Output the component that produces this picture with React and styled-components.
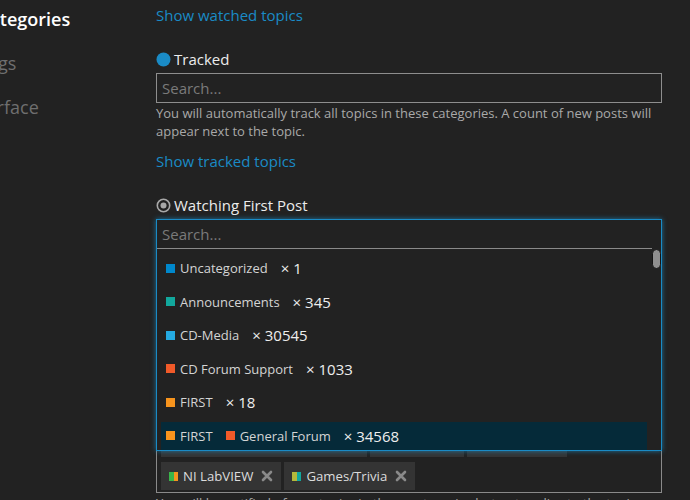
import React from "react";
import styled, { createGlobalStyle } from "styled-components";

const GlobalStyle = createGlobalStyle`
  html, body {
    margin: 0;
    padding: 0;
    background: #222222;
    overflow: hidden;
  }
  body {
    font-family: "Open Sans", "Noto Sans", sans-serif;
    color: #dddddd;
  }
`;

const Page = styled.div`
  display: flex;
  width: 690px;
  height: 500px;
  overflow: hidden;
`;

const Nav = styled.ul`
  list-style: none;
  margin: -3px 0 0 -22px;
  padding: 0;
  width: 178px;
  flex-shrink: 0;
`;

const NavItem = styled.li`
  height: 44px;
  line-height: 44px;
  font-size: 18px;
  font-weight: ${(p) => (p.active ? 600 : 400)};
  color: ${(p) => (p.active ? "#ffffff" : "#6f6f6f")};
  white-space: nowrap;
  margin-left: ${(p) => p.shift || 0}px;
`;

const Main = styled.div`
  width: 506px;
  padding-top: 5px;
  display: flex;
  flex-direction: column;
`;

const Link = styled.a`
  font-size: 15px;
  line-height: 20px;
  color: #1a8bc6;
  text-decoration: none;
  align-self: flex-start;
`;

const Label = styled.div`
  display: flex;
  align-items: center;
  gap: 3px;
  margin-top: 24px;
  font-size: 15px;
  line-height: 20px;
  color: #ececec;
`;

const SearchBox = styled.div`
  margin-top: 4px;
  height: 30px;
  box-sizing: border-box;
  border: 1px solid #8e8e8e;
  padding-left: 5px;
  font-size: 15px;
  line-height: 28px;
  color: #7a7a7a;
`;

const Help = styled.p`
  margin: 1px 0 11px;
  font-size: 13px;
  line-height: 18px;
  color: #a9a9a9;
`;

const SelectWrap = styled.div`
  position: relative;
  margin-top: 4px;
`;

const ChipBox = styled.div`
  box-sizing: border-box;
  min-height: 274px;
  border: 1px solid #8a8a8a;
  padding: 4px 4px 2px;
  display: flex;
  flex-wrap: wrap;
  align-content: flex-end;
  gap: 5px 3px;
`;

const Chip = styled.div`
  display: flex;
  align-items: center;
  height: 28px;
  padding: 0 8px;
  background: #343434;
  font-size: 13.2px;
  color: #dcdcdc;
  box-sizing: border-box;
  width: ${(p) => (p.w ? `${p.w}px` : "auto")};
`;

const DualSwatch = styled.span`
  width: 9px;
  height: 9px;
  margin-right: 5px;
  background: linear-gradient(
    to right,
    ${(p) => p.a} 0 50%,
    ${(p) => p.b} 50% 100%
  );
`;

const ChipClose = styled.svg`
  margin-left: 8px;
  width: 12px;
  height: 12px;
`;

const Dropdown = styled.div`
  position: absolute;
  top: 0;
  left: 0;
  right: 0;
  height: 232px;
  box-sizing: border-box;
  border: 1px solid #1a8bc6;
  box-shadow: 0 0 5px rgba(26, 139, 198, 0.75);
  background: #222222;
  z-index: 2;
  overflow: hidden;
`;

const Filter = styled.div`
  height: 29px;
  box-sizing: border-box;
  border-bottom: 1px solid #8a8a8a;
  padding-left: 5px;
  font-size: 15px;
  line-height: 28px;
  color: #7a7a7a;
  margin-right: 9px;
`;

const Thumb = styled.div`
  position: absolute;
  top: 29px;
  right: 0;
  width: 9px;
  height: 20px;
  box-sizing: border-box;
  border: 1px solid #151515;
  border-radius: 5px;
  background: #8f8f8f;
`;

const List = styled.ul`
  list-style: none;
  margin: 0;
  padding: 5px 14px 0 4px;
  display: flex;
  flex-direction: column;
  gap: 5.5px;
`;

const Row = styled.li`
  display: flex;
  align-items: center;
  height: 28px;
  padding-left: 5px;
  background: ${(p) => (p.active ? "#052a39" : "transparent")};
`;

const Badge = styled.span`
  display: flex;
  align-items: center;
  font-size: 13px;
  color: #d4d4d4;
  & + & {
    margin-left: 13px;
  }
`;

const Swatch = styled.span`
  width: 9px;
  height: 9px;
  margin-right: 5px;
  background: ${(p) => p.color};
`;

const Count = styled.span`
  margin-left: 13px;
  font-size: 15px;
  color: #eeeeee;
`;

const BottomHelp = styled.p`
  margin: 1px 0 0;
  font-size: 13px;
  line-height: 18px;
  color: #a9a9a9;
  white-space: nowrap;
`;

const TrackedIcon = () => (
  <svg width="15" height="15" viewBox="0 0 15 15">
    <circle cx="7.5" cy="7.5" r="7" fill="#1a8bc6" />
  </svg>
);

const FirstPostIcon = () => (
  <svg width="15" height="15" viewBox="0 0 15 15">
    <circle cx="7.5" cy="7.5" r="6.2" fill="none" stroke="#a8a8a8" strokeWidth="1.6" />
    <circle cx="7.5" cy="7.5" r="3" fill="#a8a8a8" />
  </svg>
);

const CloseX = () => (
  <ChipClose viewBox="0 0 12 12">
    <path d="M2 2 L10 10 M10 2 L2 10" stroke="#8a8a8a" strokeWidth="2.6" strokeLinecap="round" />
  </ChipClose>
);

const options = [
  { cats: [{ name: "Uncategorized", color: "#0088cc" }], count: 1 },
  { cats: [{ name: "Announcements", color: "#12a89d" }], count: 345 },
  { cats: [{ name: "CD-Media", color: "#25aae1" }], count: 30545 },
  { cats: [{ name: "CD Forum Support", color: "#f15a29" }], count: 1033 },
  { cats: [{ name: "FIRST", color: "#f7941d" }], count: 18 },
  {
    cats: [
      { name: "FIRST", color: "#f7941d" },
      { name: "General Forum", color: "#f15a29" },
    ],
    count: 34568,
    active: true,
  },
];

// chips in the row that the open menu covers; only their lower edge shows
const hiddenChips = [
  { name: "Technical Discussion", a: "#f7941d", b: "#0088cc", w: 206 },
  { name: "Robotics", a: "#f7941d", b: "#12a89d", w: 94 },
  { name: "Programming", a: "#f7941d", b: "#25aae1", w: 100 },
];

const chips = [
  { name: "NI LabVIEW", a: "#3ab54a", b: "#f7941d" },
  { name: "Games/Trivia", a: "#b5b83a", b: "#12a89d" },
];

export default function App() {
  return (
    <Page>
      <GlobalStyle />
      <Nav>
        <NavItem active>Categories</NavItem>
        <NavItem>Tags</NavItem>
        <NavItem shift={-14}>Interface</NavItem>
      </Nav>
      <Main>
        <Link href="#">Show watched topics</Link>

        <Label>
          <TrackedIcon />
          Tracked
        </Label>
        <SearchBox>Search...</SearchBox>
        <Help>
          You will automatically track all topics in these categories. A count of new posts will
          appear next to the topic.
        </Help>
        <Link href="#">Show tracked topics</Link>

        <Label>
          <FirstPostIcon />
          Watching First Post
        </Label>
        <SelectWrap>
          <ChipBox>
            {hiddenChips.concat(chips).map((c) => (
              <Chip key={c.name} w={c.w}>
                <DualSwatch a={c.a} b={c.b} />
                {c.name}
                <CloseX />
              </Chip>
            ))}
          </ChipBox>
          <Dropdown>
            <Filter>Search...</Filter>
            <Thumb />
            <List>
              {options.map((o, i) => (
                <Row key={i} active={o.active}>
                  {o.cats.map((c) => (
                    <Badge key={c.name}>
                      <Swatch color={c.color} />
                      {c.name}
                    </Badge>
                  ))}
                  <Count>× {o.count}</Count>
                </Row>
              ))}
            </List>
          </Dropdown>
        </SelectWrap>
        <BottomHelp>
          You will be notified of new topics in these categories but not replies to the topics.
        </BottomHelp>
      </Main>
    </Page>
  );
}
